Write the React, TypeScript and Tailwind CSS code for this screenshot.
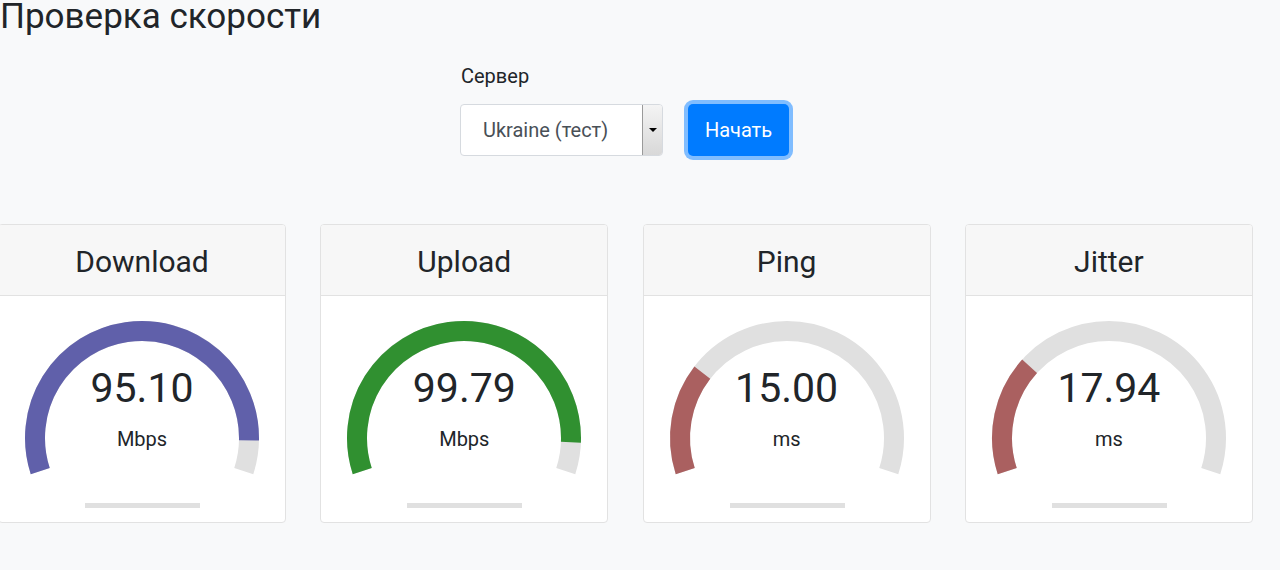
import React from 'react';

type Gauge = {
  title: string;
  value: string;
  unit: string;
  amount: number;
  color: string;
};

const GAUGES: Gauge[] = [
  { title: 'Download', value: '95.10', unit: 'Mbps', amount: mbpsToAmount(95.1), color: '#6060AA' },
  { title: 'Upload', value: '99.79', unit: 'Mbps', amount: mbpsToAmount(99.79), color: '#309030' },
  { title: 'Ping', value: '15.00', unit: 'ms', amount: msToAmount(15), color: '#AA6060' },
  { title: 'Jitter', value: '17.94', unit: 'ms', amount: msToAmount(17.94), color: '#AA6060' },
];

function mbpsToAmount(s: number) {
  return 1 - 1 / Math.pow(1.3, Math.sqrt(s));
}

function msToAmount(d: number) {
  return 1 - 1 / Math.pow(1.08, Math.sqrt(d));
}

const CX = 143;
const CY = 142;
const R = 107;
const START = -Math.PI * 1.1;
const SWEEP = Math.PI * 1.2;

function arcPath(from: number, to: number) {
  const x1 = CX + R * Math.cos(from);
  const y1 = CY + R * Math.sin(from);
  const x2 = CX + R * Math.cos(to);
  const y2 = CY + R * Math.sin(to);
  const large = to - from > Math.PI ? 1 : 0;
  return `M ${x1} ${y1} A ${R} ${R} 0 ${large} 1 ${x2} ${y2}`;
}

function GaugeCard({ gauge }: { gauge: Gauge }) {
  return (
    <div className="w-[288px] shrink-0 overflow-hidden rounded-[4px] border border-[#e2e2e2] bg-white">
      <div className="flex h-[71px] items-center justify-center border-b border-[#e2e2e2] bg-[#f7f7f7] pt-[2px] text-[30px] text-[#212529]">
        {gauge.title}
      </div>
      <div className="relative h-[226px]">
        <svg width="286" height="226" className="block">
          <path d={arcPath(START, START + SWEEP)} fill="none" stroke="#e0e0e0" strokeWidth="20" />
          <path
            d={arcPath(START, START + SWEEP * gauge.amount)}
            fill="none"
            stroke={gauge.color}
            strokeWidth="20"
          />
          <rect x="86" y="207" width="115" height="5" fill="#e0e0e0" />
        </svg>
        <div className="absolute inset-x-0 top-[67px] text-center text-[41px] leading-[50px] text-[#212529]">
          {gauge.value}
        </div>
        <div className="absolute inset-x-0 top-[131px] text-center text-[20px] leading-[24px] text-[#212529]">
          {gauge.unit}
        </div>
      </div>
    </div>
  );
}

export default function App() {
  return (
    <div className="min-h-[570px] overflow-hidden bg-[#f8f9fa] font-['Roboto',sans-serif] text-[#212529]">
      <h3 className="text-[35px] leading-[34px]">Проверка скорости</h3>

      <div className="mt-[30px] pl-[461px]">
        <div className="text-[20px] leading-[24px]">Сервер</div>
        <div className="mt-[16px] ml-[-1px] flex items-center gap-[25px]">
          <div className="flex h-[52px] w-[203px] items-stretch rounded-[4px] border border-[#d6dadf] bg-white">
            <div className="flex flex-1 items-center pl-[22px] text-[20px] text-[#495057]">
              Ukraine (тест)
            </div>
            <div className="flex w-[20px] items-center justify-center rounded-r-[3px] border-l border-[#9a9a9a] bg-gradient-to-b from-[#f4f4f4] to-[#d8d8d8]">
              <div className="h-0 w-0 border-x-[4px] border-t-[4px] border-x-transparent border-t-black" />
            </div>
          </div>
          <button
            type="button"
            className="h-[52px] w-[101px] rounded-[5px] bg-[#007bff] text-[20px] text-white ring-4 ring-[#80bdff]"
          >
            Начать
          </button>
        </div>
      </div>

      <div className="mt-[68px] ml-[-2px] flex gap-[34.3px]">
        {GAUGES.map((gauge) => (
          <GaugeCard key={gauge.title} gauge={gauge} />
        ))}
      </div>
    </div>
  );
}
